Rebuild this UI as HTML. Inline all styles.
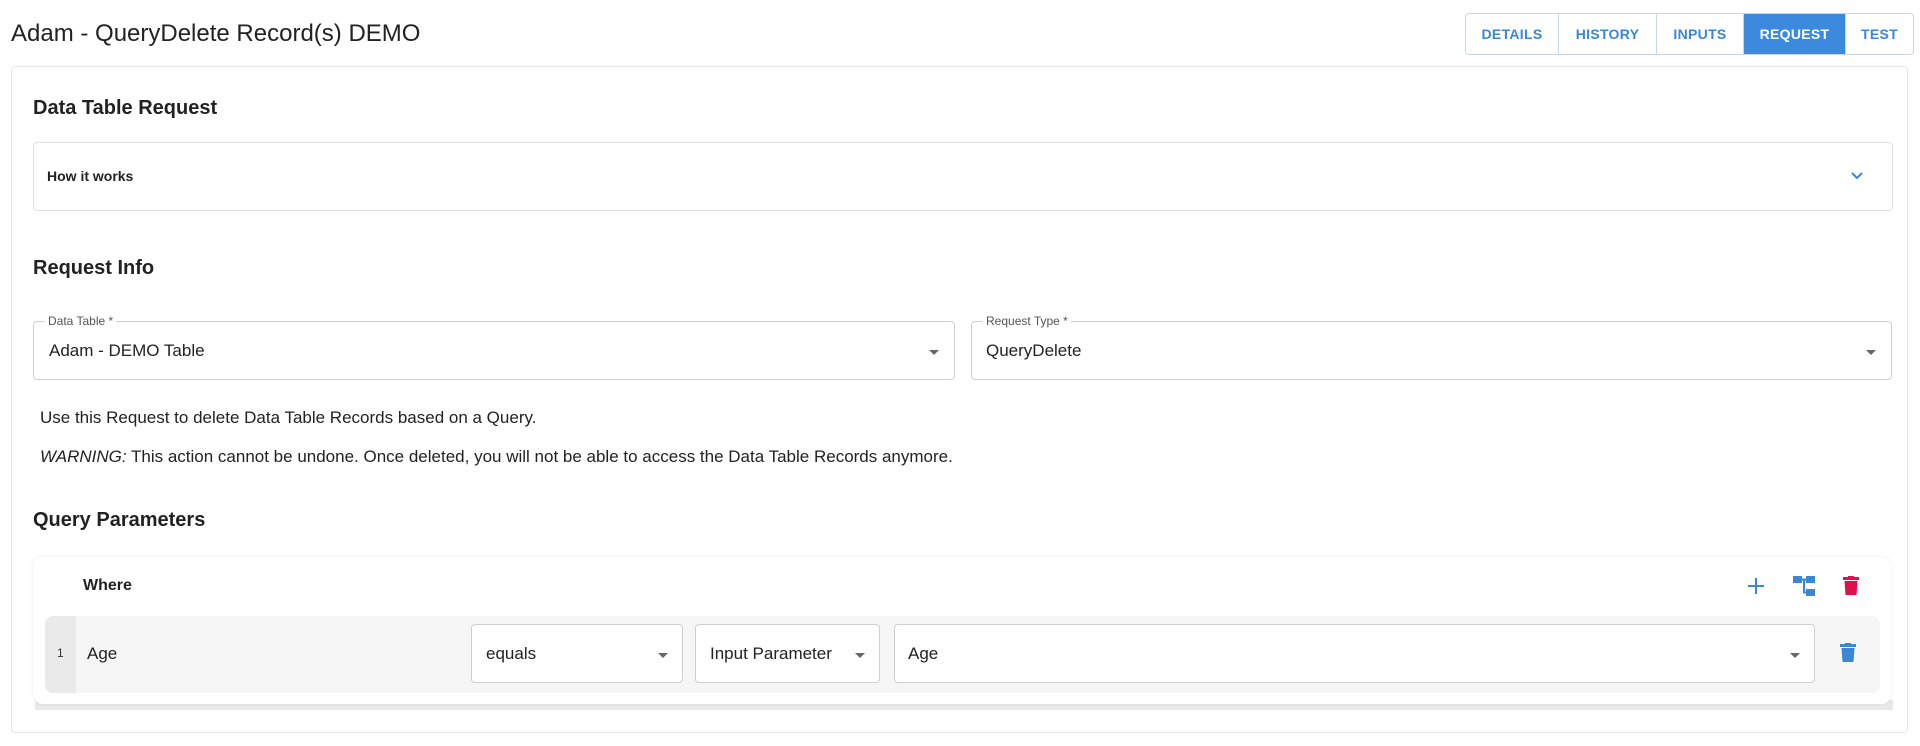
<!DOCTYPE html>
<html><head><meta charset="utf-8"><style>
*{box-sizing:border-box;margin:0;padding:0}
body{width:1920px;height:746px;background:#fff;font-family:"Liberation Sans",Arial,sans-serif;color:#222;position:relative;overflow:hidden}
.a{position:absolute}
.title{left:11px;top:20px;font-size:24px;color:#222}
.tabs{left:1465px;top:13px;width:449px;height:42px;border:1px solid #c9d6e6;border-radius:4px;display:flex;overflow:hidden}
.tabs div{display:flex;align-items:center;justify-content:center;font-size:14px;font-weight:bold;color:#3a87d6;letter-spacing:.3px;border-right:1px solid #c9d6e6}
.tabs div:last-child{border-right:none}
.tabs .on{background:#3b8ade;color:#fff}
.card{left:11px;top:66px;width:1897px;height:667px;border:1px solid #e6e6e6;border-radius:4px}
h2{position:absolute;font-size:20px;font-weight:bold;color:#222}
.box{border:1px solid #e0e0e0;border-radius:4px}
.fld{border:1px solid #cfcfcf;border-radius:4px;background:#fff}
.lbl{font-size:12px;color:#555;background:#fff;padding:0 3px}
.val{font-size:17px;color:#222}
.arr{width:0;height:0;border-left:5px solid transparent;border-right:5px solid transparent;border-top:5px solid #666}
p.t{position:absolute;left:40px;font-size:17px;color:#222}
</style></head><body>
<div class="a title">Adam - QueryDelete Record(s) DEMO</div>
<div class="a tabs">
<div style="width:93px">DETAILS</div><div style="width:98px">HISTORY</div><div style="width:87px">INPUTS</div><div class="on" style="width:102px">REQUEST</div><div style="flex:1">TEST</div>
</div>
<div class="a card"></div>
<h2 style="left:33px;top:97px">Data Table Request</h2>
<div class="a box" style="left:33px;top:142px;width:1860px;height:69px"></div>
<div class="a" style="left:47px;top:168px;font-size:14px;font-weight:bold;color:#222">How it works</div>
<svg class="a" style="left:1850px;top:171px" width="14" height="10" viewBox="0 0 14 10"><path d="M2 2l5 5 5-5" stroke="#3a87d6" stroke-width="2" fill="none"/></svg>
<h2 style="left:33px;top:257px">Request Info</h2>
<div class="a fld" style="left:33px;top:321px;width:922px;height:59px"></div>
<div class="a lbl" style="left:45px;top:314px">Data Table *</div>
<div class="a val" style="left:49px;top:341px">Adam - DEMO Table</div>
<div class="a arr" style="left:929px;top:350px"></div>
<div class="a fld" style="left:971px;top:321px;width:921px;height:59px"></div>
<div class="a lbl" style="left:983px;top:314px">Request Type *</div>
<div class="a val" style="left:986px;top:341px">QueryDelete</div>
<div class="a arr" style="left:1866px;top:350px"></div>
<p class="t" style="top:408px">Use this Request to delete Data Table Records based on a Query.</p>
<p class="t" style="top:447px"><i>WARNING:</i> This action cannot be undone. Once deleted, you will not be able to access the Data Table Records anymore.</p>
<h2 style="left:33px;top:509px">Query Parameters</h2>
<div class="a" style="left:35px;top:700px;width:1858px;height:10px;background:#e9e9e9"></div>
<div class="a" style="left:33px;top:557px;width:1858px;height:147px;background:#fff;border-radius:10px;box-shadow:0 0 4px rgba(0,0,0,.08)"></div>
<div class="a" style="left:83px;top:577px;font-size:16px;font-weight:bold">Where</div>
<svg class="a" style="left:1747px;top:577px" width="18" height="18" viewBox="0 0 18 18"><path d="M9 1v16M1 9h16" stroke="#3a87d6" stroke-width="2"/></svg>
<svg class="a" style="left:1793px;top:576px" width="22" height="20" viewBox="0 0 22 20"><rect x="0" y="0" width="9" height="7" fill="#3a87d6"/><rect x="13" y="0" width="9" height="7" fill="#3a87d6"/><rect x="13" y="13" width="9" height="7" fill="#3a87d6"/><path d="M9 3.5h4M11 3.5v13h2" stroke="#3a87d6" stroke-width="2" fill="none"/></svg>
<svg class="a" style="left:1843px;top:576px" width="16" height="20" viewBox="0 0 16 20"><rect x="0" y="1" width="16" height="3" fill="#e0104f"/><rect x="5" y="0" width="6" height="2" fill="#e0104f"/><path d="M1.5 5h13l-1 14h-11z" fill="#e0104f"/></svg>
<div class="a" style="left:45px;top:616px;width:1835px;height:77px;background:#f6f6f6;border-radius:8px;overflow:hidden"><div style="width:31px;height:100%;background:#eaeaea"></div></div>
<div class="a" style="left:57px;top:646px;font-size:12px;color:#333">1</div>
<div class="a val" style="left:87px;top:644px">Age</div>
<div class="a fld" style="left:471px;top:624px;width:212px;height:59px"></div>
<div class="a val" style="left:486px;top:644px">equals</div>
<div class="a arr" style="left:658px;top:653px"></div>
<div class="a fld" style="left:695px;top:624px;width:185px;height:59px"></div>
<div class="a val" style="left:710px;top:644px">Input Parameter</div>
<div class="a arr" style="left:855px;top:653px"></div>
<div class="a fld" style="left:894px;top:624px;width:921px;height:59px"></div>
<div class="a val" style="left:908px;top:644px">Age</div>
<div class="a arr" style="left:1790px;top:653px"></div>
<svg class="a" style="left:1840px;top:643px" width="16" height="20" viewBox="0 0 16 20"><rect x="0" y="1" width="16" height="3" fill="#3a87d6"/><rect x="5" y="0" width="6" height="2" fill="#3a87d6"/><path d="M1.5 5h13l-1 14h-11z" fill="#3a87d6"/></svg>
</body></html>
